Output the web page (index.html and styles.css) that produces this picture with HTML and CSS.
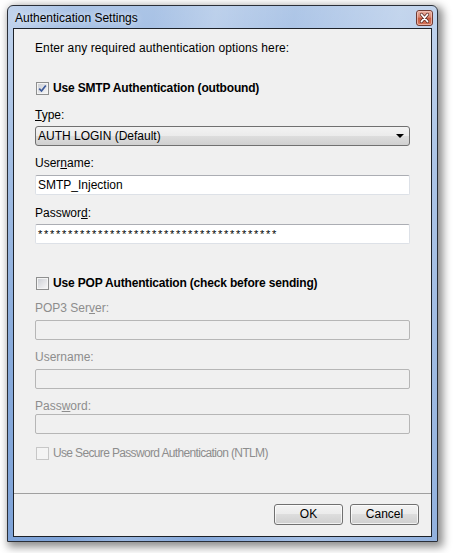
FILE: index.html
```html
<!DOCTYPE html>
<html>
<head>
<meta charset="utf-8">
<link rel="stylesheet" href="styles.css">
</head>
<body>
<div class="stage">
  <div class="window">
    <div class="titlebar">
      <span class="title">Authentication Settings</span>
      <span class="close">
        <svg width="17" height="16" viewBox="0 0 17 16">
          <defs>
            <linearGradient id="cg" x1="0" y1="0" x2="0" y2="1">
              <stop offset="0" stop-color="#eab1a3"/>
              <stop offset="0.45" stop-color="#d98670"/>
              <stop offset="0.5" stop-color="#c65a3f"/>
              <stop offset="1" stop-color="#d4765c"/>
            </linearGradient>
          </defs>
          <rect x="0.5" y="0.5" width="16" height="15" rx="2.5" fill="url(#cg)" stroke="#6e3a33"/>
          <rect x="1.5" y="1.5" width="14" height="13" rx="1.5" fill="none" stroke="#f3c7bd" stroke-opacity="0.7"/>
          <path d="M5.5 4.5 L11.5 11.5 M11.5 4.5 L5.5 11.5" stroke="#5a2a24" stroke-width="3.2" stroke-linecap="round"/>
          <path d="M5.5 4.5 L11.5 11.5 M11.5 4.5 L5.5 11.5" stroke="#ffffff" stroke-width="1.8" stroke-linecap="round"/>
        </svg>
      </span>
    </div>
    <div class="client">
      <div class="form">
        <div class="intro">Enter any required authentication options here:</div>

        <label class="cbrow r-cb1">
          <span class="cb checked">
            <svg width="9" height="9" viewBox="0 0 9 9"><path d="M1.2 4.6 L3.5 7 L7.8 1.5" fill="none" stroke="#3c5a9a" stroke-width="1.7"/></svg>
          </span>
          <span class="bold">Use SMTP Authentication (outbound)</span>
        </label>

        <div class="lbl r-type"><span class="u">T</span>ype:</div>
        <div class="select r-sel">
          <span>AUTH LOGIN (Default)</span>
          <span class="arrow"></span>
        </div>

        <div class="lbl r-user">User<span class="u">n</span>ame:</div>
        <div class="input r-uin">SMTP_Injection</div>

        <div class="lbl r-pass">Passwor<span class="u">d</span>:</div>
        <div class="input r-pin stars">****************************************</div>

        <label class="cbrow r-cb2">
          <span class="cb"></span>
          <span class="bold">Use POP Authentication (check before sending)</span>
        </label>

        <div class="lbl dis r-pop">POP3 Ser<span class="u">v</span>er:</div>
        <div class="input disabled r-popin"></div>

        <div class="lbl dis r-user2">Username:</div>
        <div class="input disabled r-uin2"></div>

        <div class="lbl dis r-pass2">Pass<span class="u">w</span>ord:</div>
        <div class="input disabled r-pin2"></div>

        <label class="cbrow dis r-cb3">
          <span class="cb disabledcb"></span>
          <span class="ntlm">Use Secure Password Authentication (NTLM)</span>
        </label>
      </div>
      <div class="footer">
        <div class="btn">OK</div>
        <div class="btn">Cancel</div>
      </div>
    </div>
  </div>
</div>
</body>
</html>
```

FILE: styles.css
```css
html, body {
  margin: 0;
  padding: 0;
  background: #ffffff;
  width: 453px;
  height: 553px;
  overflow: hidden;
}

body {
  font-family: "Liberation Sans", Arial, sans-serif;
  font-size: 12px;
  color: #000;
}

.stage {
  padding: 5px 0 0 7px;
}

.window {
  box-sizing: border-box;
  width: 431px;
  height: 537px;
  border: 1px solid #2a2f38;
  border-radius: 6px 6px 0 0;
  background:
    linear-gradient(100deg, rgba(255,255,255,0.28) 0%, rgba(255,255,255,0) 12%, rgba(255,255,255,0) 28%, rgba(255,255,255,0.22) 40%, rgba(255,255,255,0.05) 55%, rgba(255,255,255,0.3) 75%, rgba(255,255,255,0.15) 100%),
    linear-gradient(to bottom, #abc4e6 0%, #93b3df 30%, #7ea3d8 100%);
  box-shadow: 3px 3px 9px 2px rgba(0,0,0,0.45);
  display: flex;
  flex-direction: column;
}

.titlebar {
  height: 22px;
  display: flex;
  align-items: flex-start;
  justify-content: space-between;
  padding: 0 4px 0 7px;
}

.title {
  line-height: 15px;
  margin-top: 5px;
  color: #000;
  text-shadow: 0 0 6px rgba(255,255,255,0.9);
}

.close {
  display: block;
  width: 17px;
  height: 16px;
  margin-top: 4px;
}

.close svg {
  display: block;
}

.client {
  flex: 1;
  margin: 0 5px 4px 5px;
  border: 1px solid #1d2229;
  background: #f0f0f0;
  display: flex;
  flex-direction: column;
}

.form {
  flex: 1;
  padding: 12px 21px 0 21px;
  display: flex;
  flex-direction: column;
}

.intro, .lbl {
  line-height: 15px;
  height: 15px;
}

.intro {
  letter-spacing: 0.1px;
}

.u {
  text-decoration: underline;
}

.dis {
  color: #8d8d8d;
}

.bold {
  font-weight: bold;
  letter-spacing: -0.17px;
}

.ntlm {
  letter-spacing: -0.65px;
}

.cbrow {
  display: flex;
  align-items: center;
  height: 16px;
  line-height: 15px;
  gap: 4px;
  padding-left: 1px;
}

.cb {
  box-sizing: border-box;
  width: 13px;
  height: 13px;
  border: 1px solid #8e8f8f;
  background: linear-gradient(135deg, #c9ccd2 0%, #e2e3e6 50%, #f9f9f9 100%);
  box-shadow: inset 0 0 0 1px #f4f4f4;
  display: flex;
  align-items: center;
  justify-content: center;
  flex: none;
}

.cb svg {
  display: block;
}

.disabledcb {
  border-color: #c7c7c7;
  background: #f4f4f4;
  box-shadow: none;
}

.select {
  box-sizing: border-box;
  height: 20px;
  border: 1px solid #707070;
  border-radius: 3px;
  background: linear-gradient(to bottom, #f3f3f3 0%, #ebebeb 50%, #dddddd 50%, #d0d0d0 100%);
  display: flex;
  align-items: center;
  justify-content: space-between;
  padding: 0 4px 0 2px;
  line-height: 15px;
}

.arrow {
  width: 0;
  height: 0;
  border-left: 4px solid transparent;
  border-right: 4px solid transparent;
  border-top: 4px solid #000;
  margin-right: 1px;
}

.input {
  box-sizing: border-box;
  height: 20px;
  background: #ffffff;
  border: 1px solid #dde1e7;
  border-top-color: #abadb3;
  border-radius: 2px;
  padding: 0 2px;
  line-height: 18px;
}

.stars {
  letter-spacing: 1.72px;
  font-size: 11px;
}

.input.disabled {
  background: #f0f0f0;
  border-color: #b6b6b6;
}

/* vertical rhythm */
.r-cb1 { margin-top: 24px; }
.r-type { margin-top: 12px; }
.r-sel { margin-top: 3px; }
.r-user { margin-top: 10px; }
.r-uin { margin-top: 4px; }
.r-pass { margin-top: 11px; }
.r-pin { margin-top: 3px; }
.r-cb2 { margin-top: 31px; }
.r-pop { margin-top: 10px; }
.r-popin { margin-top: 4px; }
.r-user2 { margin-top: 10px; }
.r-uin2 { margin-top: 4px; }
.r-pass2 { margin-top: 10px; }
.r-pin2 { margin-top: 0; }
.r-cb3 { margin-top: 11px; }

.footer {
  height: 43px;
  box-sizing: border-box;
  border-top: 1px solid #a0a0a0;
  display: flex;
  justify-content: flex-end;
  align-items: flex-start;
  gap: 7px;
  padding: 10px 12px 0 0;
}

.btn {
  box-sizing: border-box;
  width: 69px;
  height: 21px;
  border: 1px solid #707070;
  border-radius: 3px;
  background: linear-gradient(to bottom, #f3f3f3 0%, #ebebeb 50%, #dddddd 50%, #cfcfcf 100%);
  box-shadow: inset 0 0 0 1px rgba(255,255,255,0.7);
  text-align: center;
  line-height: 19px;
}
```
